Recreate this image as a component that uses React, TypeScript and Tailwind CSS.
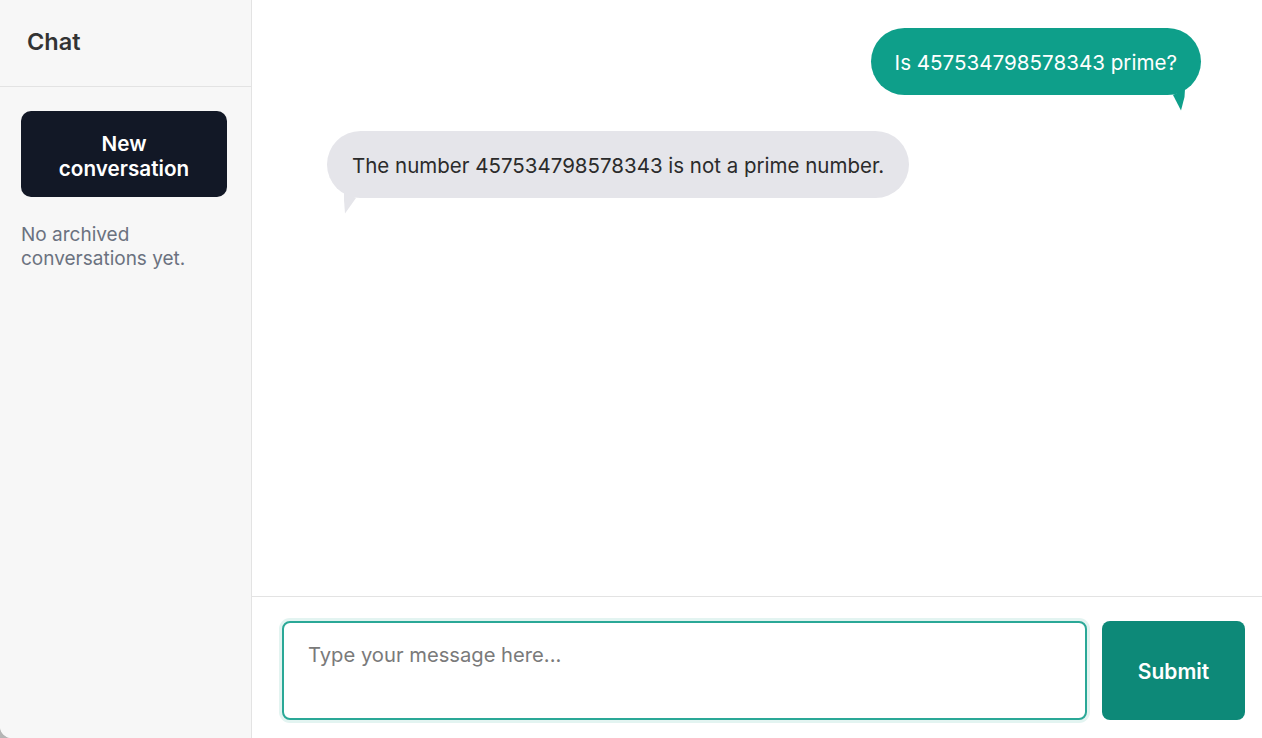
import React from "react";

export default function App() {
  return (
    <div className="w-[1262px] h-[738px] bg-[#b5b5b5]" style={{ fontFamily: "Inter, 'Noto Sans', sans-serif" }}>
      <div className="flex w-full h-full bg-white rounded-bl-[12px] overflow-hidden">
        <aside className="w-[252px] shrink-0 bg-[#f7f7f7] border-r border-[#e3e3e3] flex flex-col">
          <div className="h-[87px] border-b border-[#e3e3e3] flex items-center pl-[27px] pb-[2px]">
            <h1 className="text-[23.5px] font-semibold text-[#333333]">Chat</h1>
          </div>
          <div className="px-[21px] pt-[24px]">
            <button className="w-[206px] h-[86px] rounded-[10px] bg-[#121826] text-white text-[20.7px] font-semibold leading-[25px] pt-[3px]">
              New
              <br />
              conversation
            </button>
            <p className="mt-[26px] text-[19px] leading-[24px] text-[#6b7280]">
              No archived conversations yet.
            </p>
          </div>
        </aside>
        <main className="flex-1 flex flex-col min-w-0">
          <div className="flex-1 flex flex-col pt-[28px]">
            <div className="flex justify-end pr-[61px]">
              <div className="relative bg-[#0e9f8a] text-white text-[20.6px] leading-[27px] rounded-[34px] px-[24px] pt-[21px] pb-[19px] whitespace-nowrap">
                Is 457534798578343 prime?
                <svg className="absolute right-[16px] bottom-[-16px]" width="14" height="22" viewBox="0 0 14 22">
                  <path d="M2 6 L14 0 L13.5 8 L10 21.5 Z" fill="#0e9f8a" />
                </svg>
              </div>
            </div>
            <div className="flex justify-start pl-[75px] mt-[36px]">
              <div className="relative bg-[#e5e5ea] text-[#2b2b2b] text-[20.5px] leading-[27px] rounded-[34px] px-[25px] pt-[21px] pb-[19px] whitespace-nowrap">
                The number 457534798578343 is not a prime number.
                <svg className="absolute left-[15px] bottom-[-16px]" width="16" height="22" viewBox="0 0 16 22">
                  <path d="M2 0 L2 8 L3 21.5 L14 6 Z" fill="#e5e5ea" />
                </svg>
              </div>
            </div>
          </div>
          <div className="h-[142px] border-t border-[#e3e3e3] flex pl-[30px] pr-[17px] pt-[24px] pb-[18px] gap-[15px]">
            <div className="flex-1 rounded-[8px] border-2 border-[#2aa897] ring-[3px] ring-[#e3f4f1] bg-white px-[24px] pt-[18px]">
              <span className="text-[20.2px] leading-[27px] text-[#7a7a7a]">Type your message here...</span>
            </div>
            <button className="w-[143px] rounded-[8px] bg-[#0d8978] text-white text-[21px] font-semibold pt-[2px]">
              Submit
            </button>
          </div>
        </main>
      </div>
    </div>
  );
}
